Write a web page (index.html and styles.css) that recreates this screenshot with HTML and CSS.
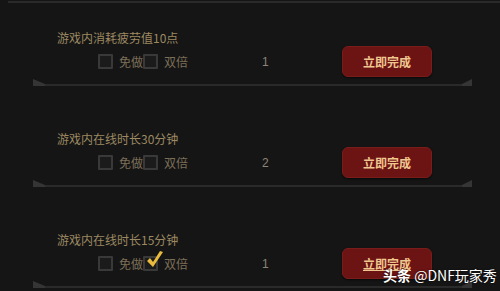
FILE: index.html
```html
<!DOCTYPE html>
<html lang="zh">
<head>
<meta charset="utf-8">
<link rel="stylesheet" href="styles.css">
</head>
<body>
<div class="page">
  <div class="topline"></div>

  <div class="row">
    <div class="title">游戏内消耗疲劳值10点</div>
    <div class="controls">
      <div class="opts">
        <span class="box"></span><span class="lbl lbl1">免做</span>
        <span class="box"></span><span class="lbl">双倍</span>
      </div>
      <div class="num">1</div>
      <div class="btn">立即完成</div>
    </div>
    <div class="sep"><span class="tri-l"></span><span class="line"></span><span class="tri-r"></span></div>
  </div>

  <div class="row">
    <div class="title">游戏内在线时长30分钟</div>
    <div class="controls">
      <div class="opts">
        <span class="box"></span><span class="lbl lbl1">免做</span>
        <span class="box"></span><span class="lbl">双倍</span>
      </div>
      <div class="num">2</div>
      <div class="btn">立即完成</div>
    </div>
    <div class="sep"><span class="tri-l"></span><span class="line"></span><span class="tri-r"></span></div>
  </div>

  <div class="row">
    <div class="title">游戏内在线时长15分钟</div>
    <div class="controls">
      <div class="opts">
        <span class="box"></span><span class="lbl lbl1">免做</span>
        <span class="box checked"><svg class="check" viewBox="0 0 20 20" width="20" height="20"><path d="M2 11 L8 17 L18 2 L15 1 L8 12 L5 8 Z" fill="#e9bb3c"/></svg></span><span class="lbl">双倍</span>
      </div>
      <div class="num">1</div>
      <div class="btn hover">立即完成</div>
    </div>
    <div class="sep"><span class="tri-l"></span><span class="line"></span><span class="tri-r"></span></div>
  </div>

  <div class="watermark"><b>头条</b> @DNF玩家秀</div>
</div>
</body>
</html>
```
FILE: styles.css
```css
html, body {
  margin: 0;
  padding: 0;
  background: #151515;
}
.page {
  position: relative;
  width: 500px;
  height: 291px;
  overflow: hidden;
  background: #151515;
  font-family: "Noto Sans CJK SC", "Noto Sans", sans-serif;
}
.topline {
  height: 2px;
  margin: 1px 0 0 8px;
  background: #2a2a2a;
}
.row {
  height: 101px;
}
.title {
  padding: 27px 0 0 57px;
  font-size: 12px;
  line-height: 16px;
  height: 16px;
  color: #9c8962;
}
.controls {
  display: flex;
  align-items: center;
  height: 31px;
  padding-left: 98px;
}
.opts {
  display: flex;
  align-items: center;
  width: 164px;
}
.box {
  position: relative;
  box-sizing: border-box;
  width: 15px;
  height: 15px;
  border: 2px solid #393939;
  background: #1b1b1b;
  border-radius: 1px;
}
.lbl {
  font-size: 12px;
  line-height: 16px;
  color: #7c6f58;
  margin-left: 6px;
}
.lbl1 {
  width: 24px;
  margin-left: 6px;
}
.check {
  position: absolute;
  left: 0px;
  top: -8px;
}
.num {
  width: 80px;
  font-family: "Liberation Sans", sans-serif;
  font-size: 12px;
  color: #8c8577;
}
.btn {
  box-sizing: border-box;
  width: 90px;
  height: 31px;
  border-radius: 6px;
  background: #6c1313;
  border: 1px solid #7a1d1a;
  box-shadow: 0 1px 2px rgba(0,0,0,0.6);
  color: #f0c68f;
  font-size: 12px;
  font-weight: bold;
  line-height: 29px;
  text-align: center;
}
.btn.hover {
  text-decoration: underline;
}
.sep {
  display: flex;
  align-items: flex-end;
  height: 7px;
  margin: 2px 28px 0 33px;
}
.tri-l {
  width: 0;
  height: 0;
  border-left: 12px solid #353535;
  border-top: 5px solid transparent;
  border-bottom: 2px solid #353535;
}
.line {
  flex: 1;
  height: 2px;
  background: #2a2a2a;
}
.tri-r {
  width: 0;
  height: 0;
  border-right: 10px solid #353535;
  border-top: 5px solid transparent;
  border-bottom: 2px solid #353535;
}
.watermark {
  position: absolute;
  left: 383px;
  top: 266px;
  color: #ffffff;
  font-size: 14px;
  line-height: 18px;
  white-space: nowrap;
  text-shadow: 0 0 2px rgba(0,0,0,0.8);
}
.watermark b {
  font-weight: bold;
}
```
